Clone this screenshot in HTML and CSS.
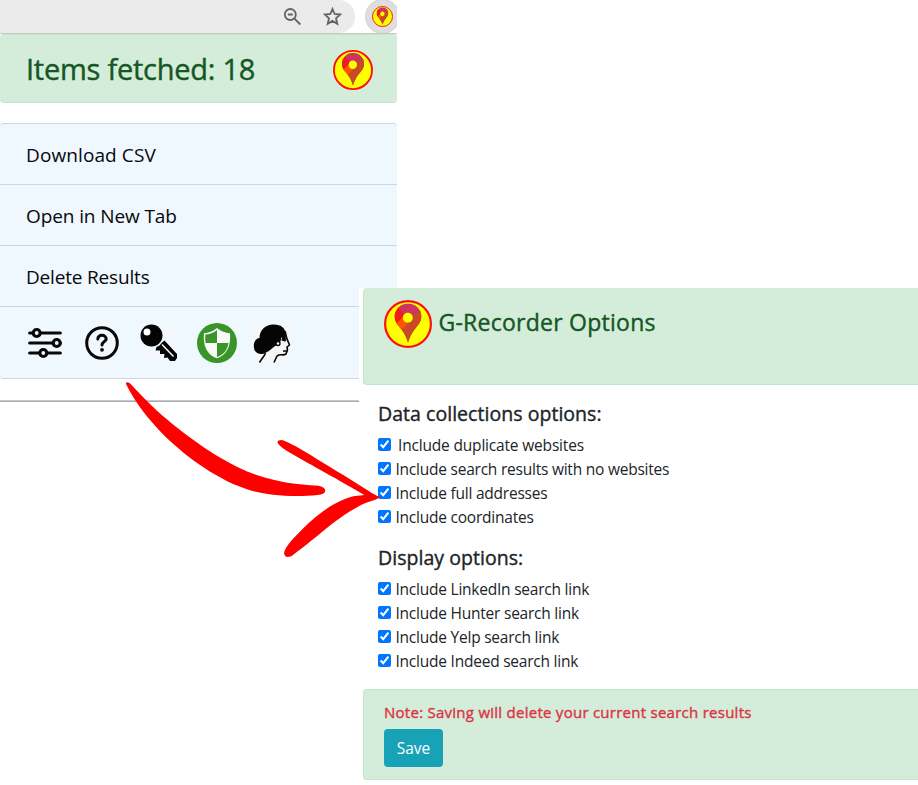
FILE: index.html
```html
<!DOCTYPE html>
<html lang="en">
<head>
<meta charset="utf-8">
<title>G-Recorder Options</title>
<link rel="stylesheet" href="styles.css">
</head>
<body>
<svg width="0" height="0" class="defs" aria-hidden="true">
  <symbol id="pin" viewBox="0 0 48 48">
    <clipPath id="pinshape"><path d="M24 42.5C22.500 38 21 34 17.500 29.500C14 25 10.700 22 10.700 16.500A13.300 12.800 0 0 1 37.300 16.500C37.300 22 34 25 30.500 29.500C27 34 25.500 38 24 42.500Z"/></clipPath>
    <circle cx="24" cy="24" r="22.900" fill="#ffff00" stroke="#ff1010" stroke-width="2.200"/>
    <g clip-path="url(#pinshape)">
      <path fill="#c94a24" d="M0 0H48V48H0Z"/>
      <path fill="#cb355f" d="M10 0H40V11L30 14L24 22L12 9Z"/>
      <path fill="#ee1c1a" d="M5 3L14 7.500L23 17L12 28L5 24Z"/>
      <path fill="#ff5500" d="M9 27L22 14L27 20L17 33Z"/>
      <path fill="#c94a24" d="M15 32L37 10L42 22L26 48Z"/>
    </g>
    <circle cx="23.800" cy="17.700" r="5" fill="#ffff00"/>
  </symbol>
</svg>
<main class="stage">
  <section class="popup">
    <div class="toolbar">
      <div class="omnibox">
        <svg class="tool" viewBox="0 0 20 20"><g fill="none" stroke="#606368" stroke-width="1.800"><circle cx="7.300" cy="7.500" r="5.500"/><path d="M11.500 11.700L17.300 17.500M4.800 7.500H9.800"/></g></svg>
        <svg class="tool" viewBox="0 0 20 20"><path d="M9.500 2L11.600 7L17.200 7.500L13 11.200L14.300 16.800L9.500 13.900L4.700 16.800L6 11.200L1.800 7.500L7.400 7Z" fill="none" stroke="#606368" stroke-width="1.800"/></svg>
      </div>
      <div class="extension"><svg><use href="#pin"/></svg></div>
    </div>
    <header class="fetched"><h1>Items fetched: 18</h1><svg><use href="#pin"/></svg></header>
    <nav class="menu">
      <a class="csv">Download CSV</a>
      <a class="tab">Open in New Tab</a>
      <a class="del">Delete Results</a>
      <div class="icons">
        <svg viewBox="0 0 40 40"><g fill="#eff7ff" stroke="#080808" stroke-width="3.200" stroke-linecap="round"><path d="M4.700 10H35.300M4.700 20H35.300M4.700 30H35.300"/><circle cx="11.700" cy="10" r="3.500"/><circle cx="31.700" cy="20" r="3.500"/><circle cx="18.300" cy="30" r="3.500"/></g></svg>
        <svg viewBox="0 0 40 40"><g fill="none" stroke="#080808" stroke-width="3"><circle cx="20" cy="20" r="15.300"/><path stroke-linecap="round" d="M15.800 16C15.800 11 24.300 11.300 24.200 16C24.100 18.500 20 19 20 22"/></g><circle cx="20" cy="26.800" r="1.900" fill="#080808"/></svg>
        <svg viewBox="0 0 40 40"><path fill="#f3f8ff" d="M0 1H37V39H0Z"/><circle cx="12.500" cy="12.500" r="11" fill="#050505"/><circle cx="8" cy="9" r="3.500" fill="#fff"/><path fill="#050505" d="M23 19.500L25.500 17.500L38 31V35L36 38H31L28.500 34.500L25 35L25.500 31L21 31V27.500L16.500 27.500L17.500 24L20.500 22.500Z"/><path d="M23 21.500L34.500 33.500" stroke="#fff" stroke-width="1.500"/></svg>
        <svg class="shield" viewBox="0 0 40 40"><circle cx="20" cy="20" r="20" fill="#399527"/><path d="M20 5C16 8.500 11.500 10 7 10.200C6.200 20 8 31 20 35.300C32 31 33.800 20 33 10.200C28.500 10 24 8.500 20 5Z" fill="#fafafa"/><path d="M20 7V20H8.500C8.200 17 8.200 14.500 8.300 11.500C12.500 11.300 16.500 10 20 7ZM20 20H31.500C30.500 27 27 31.500 20 34Z" fill="#399527"/></svg>
        <svg viewBox="0 0 40 40"><path fill="#f5f6f7" d="M0 0H38V40H0Z"/><path fill="#050505" d="M6.500 15C6.500 6 14 1 21 1.500C28 1.500 32 5 32.500 10L33 18L30 17L28 14C28.500 18 26.500 21 25 22C20 23 18.500 27 14 29C10 32 4 32 1.500 27C-.500 21 2 15.500 6.500 15Z"/><g fill="none" stroke="#050505" stroke-width="1.600" stroke-linejoin="round"><path d="M32 8C33 14 34 17 36.500 22L34 24L34.500 27L33 31C30 33 27 30.500 24 33L21 39.500M12.500 30C11 34 8.500 36 6.500 39.500M28.500 16.500L32.500 18M30 28H34"/></g><circle cx="25" cy="20.500" r="2" fill="#f5f6f7" stroke="#050505" stroke-width="1.300"/></svg>
      </div>
    </nav>
    <hr>
  </section>
  <section class="options">
    <header class="alert title"><svg><use href="#pin"/></svg><h2>G-Recorder Options</h2></header>
    <form>
      <fieldset>
        <h3 class="data">Data collections options:</h3>
        <label class="wide"><input type="checkbox" checked><span>Include duplicate websites</span></label>
        <label><input type="checkbox" checked><span>Include search results with no websites</span></label>
        <label><input type="checkbox" checked><span>Include full addresses</span></label>
        <label><input type="checkbox" checked><span>Include coordinates</span></label>
      </fieldset>
      <fieldset>
        <h3>Display options:</h3>
        <label><input type="checkbox" checked><span>Include LinkedIn search link</span></label>
        <label><input type="checkbox" checked><span>Include Hunter search link</span></label>
        <label><input type="checkbox" checked><span>Include Yelp search link</span></label>
        <label><input type="checkbox" checked><span>Include Indeed search link</span></label>
      </fieldset>
      <footer class="alert save"><p>Note: Saving will delete your current search results</p><button type="button">Save</button></footer>
    </form>
  </section>
  <svg class="arrow" viewBox="0 0 840 600"><g fill="#ff0000"><path d="M48 38Q55 34 62 42C105 89 145 128 190 164C275 232 360 287 440 315C505 337 560 344 625 347Q646 351 646 363Q644 374 623 375C560 382 480 378 425 362C330 336 230 262 165 199C115 148 75 97 48 42Z"/><path d="M503 219Q501 210 515 210C540 214 640 280 700 315L775 362Q795 376 810 380C805 388 780 393 765 400C720 420 670 457 635 487C605 512 570 540 545 558Q525 567 522 550C525 529 555 500 580 475C620 435 670 395 730 379L763 375C690 331 600 283 545 251Q510 232 503 219Z"/></g></svg>
</main>
</body>
</html>
```
FILE: styles.css
```css
* { box-sizing: border-box; }
body { margin: 0; background: #fff; font-family: "Open Sans", sans-serif; color: #212529; overflow: hidden; }
svg { display: block; flex: none; }
h1, h2, h3, p { margin: 0; font-weight: 400; white-space: nowrap; -webkit-text-stroke: .4px currentColor; }
.defs { position: absolute; }
.stage { position: relative; display: grid; width: 918px; height: 785px; }
.popup, .options { grid-area: 1 / 1; }
.popup { width: 397px; overflow: hidden; }
.toolbar { display: flex; height: 34px; border-bottom: 1px solid #c6c8ca; overflow: hidden; }
.omnibox { display: flex; flex: none; gap: 20px; width: 355px; height: 33px; padding: 7px 0 0 283px; background: #ebebec; border-radius: 0 16px 16px 0; }
.tool { width: 20px; height: 20px; }
.extension { flex: none; width: 35px; height: 35px; margin: -1px 0 0 10px; padding: 6px; border-radius: 50%; background: #dedede; border: 1px solid #d2d2d2; }
.extension svg { width: 21px; height: 21px; }
.fetched { display: flex; align-items: center; justify-content: space-between; height: 69px; padding: 2px 24px 0 26px; border: 1px solid #c3e6cb; border-right: 0; border-left: 0; background: #d4edda; border-radius: 4px; }
.fetched svg { width: 40px; height: 40px; }
h1 { font-size: 29px; line-height: 36px; letter-spacing: -.25px; color: #155724; padding-bottom: 1px; }
.menu { margin-top: 20px; height: 256px; border: solid #ced7df; border-width: 1px 0; border-radius: 4px; background: #eff7ff; color: #080808; }
.menu a { display: flex; align-items: center; height: 61px; padding: 1px 0 0 26px; border-bottom: 1px solid #ced7df; font-size: 19px; white-space: nowrap; }
.menu .csv { letter-spacing: .1px; }
.menu .tab { letter-spacing: -.1px; }
.menu .del { letter-spacing: -.18px; }
.icons { display: flex; gap: 17px; padding: 16px 0 0 25px; }
.icons svg { width: 40px; height: 40px; }
.icons .shield { margin: 0 -1px 0 1px; }
hr { height: 2px; margin: 21px 0 0; border: 0; background: linear-gradient(#c9c9c9 50%, #acacac 50%); }
.options { z-index: 1; margin: 288px 0 0 359px; padding-left: 4px; background: #fff; }
.alert { border: 1px solid #c3e6cb; border-right: 0; border-radius: 4px 0 0 4px; background: #d4edda; }
.title { display: flex; height: 97px; padding: 11px 0 0 20px; border-top: 0; gap: 6.500px; margin-bottom: 16px; }
.title svg { width: 48px; height: 48px; margin-top: 1px; }
h2 { font-size: 23px; line-height: 46px; letter-spacing: .25px; color: #155724; }
fieldset { min-width: 0; margin: 0 0 16px 15px; padding: 0; border: 0; }
h3 { height: 32px; font-size: 19.500px; line-height: 26px; letter-spacing: .04px; }
label { display: flex; gap: 4.500px; height: 24px; font-size: 15.500px; line-height: 24px; letter-spacing: -.23px; white-space: nowrap; }
.wide { gap: 7px; letter-spacing: -.18px; }
input { width: 13px; height: 13px; margin: 5px 0 0; accent-color: #0075ff; }
.save { height: 91px; padding: 10px 0 0 20px; }
p { font-size: 15px; line-height: 24px; letter-spacing: .26px; color: #dc3545; margin-bottom: 5px; }
button { display: block; width: 59px; height: 38px; padding: 0; border: 0; border-radius: 4px; background: #17a2b8; color: #fff; font: 15.500px "Open Sans", sans-serif; }
.arrow { position: absolute; z-index: 2; left: 110px; top: 370px; width: 280px; height: 200px; filter: blur(.500px); }
```
